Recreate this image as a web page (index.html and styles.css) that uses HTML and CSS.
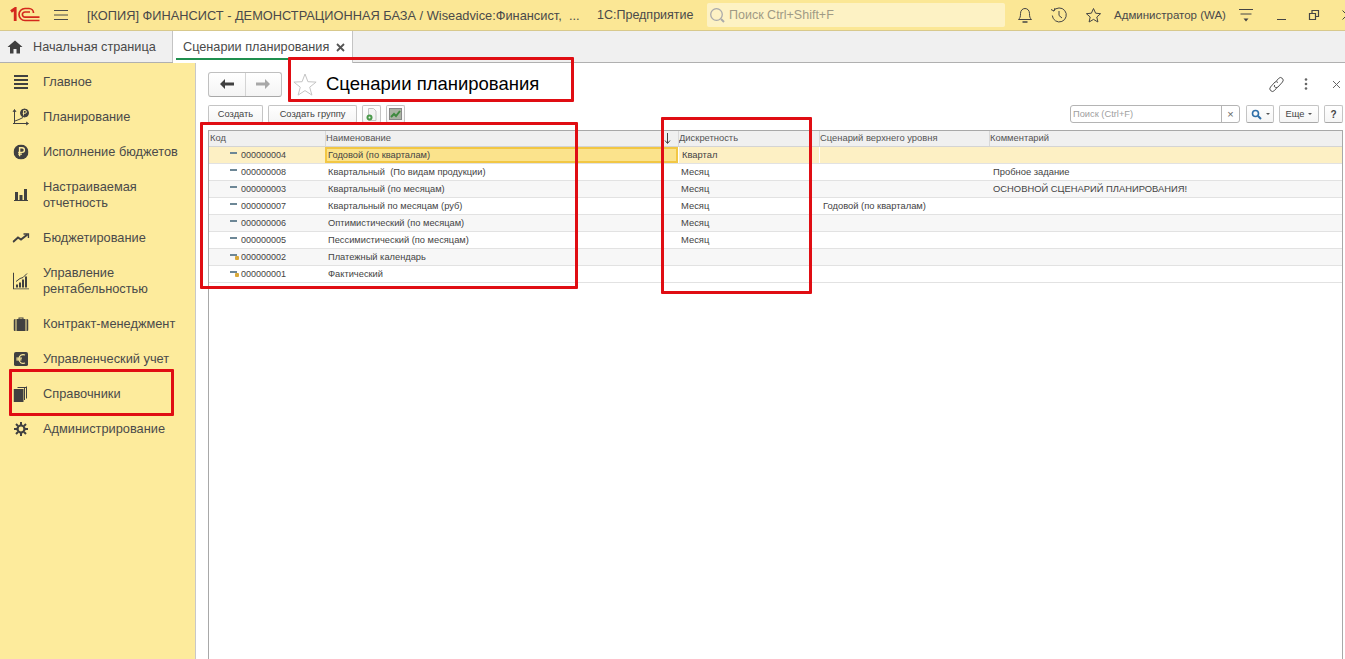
FILE: index.html
```html
<!DOCTYPE html>
<html lang="ru">
<head>
<meta charset="utf-8">
<title>Сценарии планирования</title>
<link rel="stylesheet" href="styles.css">
</head>
<body>
<header class="topbar">
  <svg class="logo" width="30" height="15" viewBox="0 0 30 15" fill="none" stroke="#d4281c"><path d="M1 4.500 L5.200 1.500 V14" stroke-width="2.800"/><path d="M29.500 13.500 H15 A5.700 5.700 0 1 1 15 1.500 H19 A4.500 4.500 0 0 1 23.500 6" stroke-width="1.700"/><path d="M29.500 10.200 H15 A2.500 2.500 0 1 1 15 5 H20" stroke-width="1.700"/></svg>
  <svg class="burger" width="16" height="12" viewBox="0 0 16 12" stroke="#4a4a4a"><path d="M1 1.500H15M1 6H15M1 10.500H15"/></svg>
  <span class="apptitle">[КОПИЯ] ФИНАНСИСТ - ДЕМОНСТРАЦИОННАЯ БАЗА / Wiseadvice:Финансист,&nbsp; ...</span>
  <span class="appname">1С:Предприятие</span>
  <div class="globalsearch">
    <svg width="17" height="17" viewBox="0 0 17 17" fill="none" stroke="#aaa"><circle cx="7.500" cy="7.500" r="5.800" stroke-width="1.300"/><path d="M12 12l3 3" stroke-width="2"/></svg>
    <span>Поиск Ctrl+Shift+F</span>
  </div>
  <div class="topicons">
    <svg width="16" height="18" viewBox="0 0 16 18" fill="none" stroke="#444"><path d="M1.500 13.500c1.500-1.500 2-2.500 2-6 0-3 2-5 4.500-5s4.500 2 4.500 5c0 3.500.5 4.500 2 6z"/><path d="M5.500 16h5" stroke-width="1.500"/></svg>
    <svg width="18" height="18" viewBox="0 0 18 18" fill="none" stroke="#444"><path d="M3.500 5a7 7 0 1 1-1.200 4.500"/><path d="M1 3.500l3 1.500 1-3" /><path d="M9 5v4.500l3 2.500"/></svg>
    <svg width="17" height="17" viewBox="0 0 17 17" fill="none" stroke="#444"><path d="M8.500 1.500l2.100 4.700 5 .5-3.800 3.300 1.100 5-4.400-2.600-4.400 2.600 1.100-5L1.400 6.700l5-.5z"/></svg>
  </div>
  <span class="user">Администратор (WA)</span>
  <svg class="usermenu" width="16" height="15" viewBox="0 0 16 15" stroke="#444" fill="#444"><path d="M1 1.500H15M2.500 6H13.500" fill="none"/><path d="M5.500 10.500h5l-2.500 3z" stroke="none"/></svg>
  <div class="winbtns">
    <svg width="12" height="12" viewBox="0 0 12 12" stroke="#444" fill="none"><path d="M2 10.500H11"/></svg>
    <svg width="12" height="12" viewBox="0 0 12 12" stroke="#444" fill="none"><path d="M1.500 4.500h6v6h-6zM4 4.500V1.500h6.500v6h-3" stroke-width="1.200"/></svg>
    <svg width="12" height="12" viewBox="0 0 12 12" stroke="#444" fill="none"><path d="M1.500 1.500l9 9M10.500 1.500l-9 9"/></svg>
  </div>
</header>

<nav class="tabbar">
  <div class="tab tab-home">
    <svg width="16" height="14" viewBox="0 0 16 14" fill="#404040"><path d="M8 .5L15.500 7H13v6.500H9.500V9h-3v4.500H3V7H.5z"/></svg>
    <span>Начальная страница</span>
  </div>
  <div class="tab tab-active">
    <span>Сценарии планирования</span>
    <svg width="9" height="9" viewBox="0 0 9 9" stroke="#555" stroke-width="1.800"><path d="M1 1l7 7M8 1L1 8"/></svg>
  </div>
</nav>

<div class="body">
  <aside class="sidebar">
    <a class="item"><svg class="ic" width="14" height="14" viewBox="0 0 14 14" stroke="#404040" stroke-width="2"><path d="M0 1H14M0 5H14M0 9H14M0 13H14"/></svg><span>Главное</span></a>
    <a class="item"><svg class="ic" width="18" height="18" viewBox="0 0 18 18" fill="none" stroke="#404040"><path d="M2.500 15V2M1 4l1.500-2.500L4 4M1 15.500h15M14 14l2.500 1.500L14 17M3 13l4-1.500 4-2"/><circle cx="12.500" cy="5" r="4" fill="#404040"/><path d="M11.500 7.500v-5h1.500a1.300 1.300 0 0 1 0 2.800h-2.300" stroke="#fdeb9c" stroke-width=".9"/></svg><span>Планирование</span></a>
    <a class="item"><svg class="ic" width="15" height="15" viewBox="0 0 16 16"><circle cx="8" cy="8" r="8" fill="#404040"/><path d="M6.500 12.500v-9h2.700a2.400 2.400 0 0 1 0 4.900H5M5 10.300h4" fill="none" stroke="#fdeb9c" stroke-width="1.500"/></svg><span>Исполнение бюджетов</span></a>
    <a class="item two"><svg class="ic" width="14" height="12" viewBox="0 0 14 12" fill="#404040"><path d="M1 3h3v8H1zM5.500 6h3v5h-3zM10 0h3v11h-3zM0 11h14v1H0z"/></svg><span>Настраиваемая<br>отчетность</span></a>
    <a class="item"><svg class="ic" width="17" height="10" viewBox="0 0 17 10" fill="none" stroke="#404040" stroke-width="2"><path d="M.5 9l5-4.500 3 2L15 1.500"/><path d="M11 1h5v4" stroke-width="1.500"/></svg><span>Бюджетирование</span></a>
    <a class="item two"><svg class="ic" width="16" height="17" viewBox="0 0 16 17" fill="#404040"><path d="M0 0h1v16h15v1H0z"/><path d="M3 12h2v3H3zM6 10h2v5H6zM9 7h2v8H9zM12 4h2v11h-2z"/><path d="M3 9l4-3 3-1 4-4" fill="none" stroke="#404040"/></svg><span>Управление<br>рентабельностью</span></a>
    <a class="item"><svg class="ic" width="15" height="14" viewBox="0 0 15 14" fill="#404040"><path d="M5 2V.5h5V2H9V1.500H6V2zM0 3.500a1.500 1.500 0 0 1 1.500-1.500H2v12h-.5A1.500 1.500 0 0 1 0 12.500zM3 2h9v12H3zM13 2h.5A1.500 1.500 0 0 1 15 3.500v9a1.500 1.500 0 0 1-1.500 1.500H13z"/></svg><span>Контракт-менеджмент</span></a>
    <a class="item"><svg class="ic" width="14" height="14" viewBox="0 0 15 15"><rect width="15" height="15" rx="2" fill="#404040"/><path d="M11.800 3.200C8.300 1.800 5.300 4 5.300 7.500S8.300 13.200 11.800 11.800M2.500 6.500h6M2.500 8.500h5.500" fill="none" stroke="#fdeb9c" stroke-width="1.200"/></svg><span>Управленческий учет</span></a>
    <a class="item"><svg class="ic" width="15" height="16" viewBox="0 0 15 16" fill="#404040"><path d="M0 3h10v13H0z"/><path d="M11 2v12M13 .5v12M4 1.500h9.500" fill="none" stroke="#404040"/></svg><span>Справочники</span></a>
    <a class="item"><svg class="ic" width="14" height="14" viewBox="0 0 14 14" fill="none" stroke="#404040"><circle cx="7" cy="7" r="3.500" stroke-width="2.200"/><path d="M7 0v3M7 11v3M0 7h3M11 7h3M2 2l2 2M10 10l2 2M12 2l-2 2M4 10l-2 2" stroke-width="2"/></svg><span>Администрирование</span></a>
  </aside>

  <main class="content">
    <div class="formhead">
      <div class="navgroup">
        <button class="navbtn"><svg width="14" height="10" viewBox="0 0 14 10" fill="#404040"><path d="M0 5l5-5v3.500h9v3H5V10z"/></svg></button>
        <button class="navbtn"><svg width="14" height="10" viewBox="0 0 14 10" fill="#a8a8a8"><path d="M14 5L9 0v3.500H0v3h9V10z"/></svg></button>
      </div>
      <svg class="star" width="24" height="23" viewBox="0 0 24 23" fill="#fff" stroke="#c4c4c4"><path d="M12 1l2.900 7.700 8.200.4-6.400 5.100 2.200 7.900L12 17.600l-6.900 4.500 2.200-7.900L.9 9.100l8.200-.4z"/></svg>
      <h1 class="title">Сценарии планирования</h1>
      <div class="formicons">
        <svg class="ic-link" width="17" height="17" viewBox="0 0 17 17" fill="none" stroke="#555"><path d="M8 5.500l2.500-3a2.600 2.600 0 0 1 4 3.500l-4.500 5a2.600 2.600 0 0 1-4-1l1-1"/><path d="M9 11.500l-2.500 3a2.600 2.600 0 0 1-4-3.500l4.500-5a2.600 2.600 0 0 1 3 .5"/></svg>
        <svg class="ic-dots" width="4" height="12" viewBox="0 0 4 12" fill="#666"><circle cx="2" cy="1.500" r="1.300"/><circle cx="2" cy="6" r="1.300"/><circle cx="2" cy="10.500" r="1.300"/></svg>
        <svg class="ic-close" width="9" height="9" viewBox="0 0 9 9" stroke="#666"><path d="M1 1l7 7M8 1L1 8"/></svg>
      </div>
    </div>

    <div class="toolbar">
      <button class="btn">Создать</button>
      <button class="btn">Создать группу</button>
      <button class="btn btn-ic"><svg width="11" height="13" viewBox="0 0 11 13"><path d="M2.500.5h5L10 3v9.500H2.500z" fill="#f4f4f4" stroke="#c4c4c4"/><circle cx="3.500" cy="9.500" r="3" fill="#4c9a4c"/><circle cx="3.500" cy="9.500" r="1" fill="#e8f4e8"/></svg></button>
      <button class="btn btn-ic"><svg width="13" height="12" viewBox="0 0 13 12"><rect x=".5" y=".5" width="12" height="11" fill="#a9b3a3" stroke="#888"/><path d="M2 9l3-3 2 2 4-5" fill="none" stroke="#3e8a3e" stroke-width="2"/></svg></button>
      <div class="spacer"></div>
      <div class="search"><span class="search-text">Поиск (Ctrl+F)</span><span class="search-x">×</span></div>
      <button class="btn btn-find"><svg width="11" height="11" viewBox="0 0 11 11" fill="none" stroke="#2f6fa8" stroke-width="1.600"><circle cx="4.500" cy="4.500" r="3"/><path d="M7 7l3 3" stroke-width="2"/></svg><i class="caret"></i></button>
      <button class="btn btn-more">Еще<i class="caret"></i></button>
      <button class="btn btn-help">?</button>
    </div>

    <div class="table">
      <div class="row head">
        <div class="c">Код</div><div class="c sep">Наименование</div><div class="c sort"><svg width="7" height="11" viewBox="0 0 7 11" fill="none" stroke="#444"><path d="M3.500 0v10M1 7.500l2.500 3 2.500-3"/></svg></div><div class="c sep">Дискретность</div><div class="c sep">Сценарий верхнего уровня</div><div class="c sep">Комментарий</div>
      </div>
      <div class="row cur">
        <div class="c code"><i class="m"></i>000000004</div><div class="c name focus">Годовой (по кварталам)</div><div class="c disc sep">Квартал</div><div class="c up sep"></div><div class="c"></div>
      </div>
      <div class="row">
        <div class="c code"><i class="m"></i>000000008</div><div class="c name">Квартальный&nbsp; (По видам продукции)</div><div class="c disc">Месяц</div><div class="c up"></div><div class="c com">Пробное задание</div>
      </div>
      <div class="row alt">
        <div class="c code"><i class="m"></i>000000003</div><div class="c name">Квартальный (по месяцам)</div><div class="c disc">Месяц</div><div class="c up"></div><div class="c com">ОСНОВНОЙ СЦЕНАРИЙ ПЛАНИРОВАНИЯ!</div>
      </div>
      <div class="row">
        <div class="c code"><i class="m"></i>000000007</div><div class="c name">Квартальный по месяцам (руб)</div><div class="c disc">Месяц</div><div class="c up">Годовой (по кварталам)</div><div class="c com"></div>
      </div>
      <div class="row alt">
        <div class="c code"><i class="m"></i>000000006</div><div class="c name">Оптимистический (по месяцам)</div><div class="c disc">Месяц</div><div class="c up"></div><div class="c com"></div>
      </div>
      <div class="row">
        <div class="c code"><i class="m"></i>000000005</div><div class="c name">Пессимистический (по месяцам)</div><div class="c disc">Месяц</div><div class="c up"></div><div class="c com"></div>
      </div>
      <div class="row alt">
        <div class="c code"><i class="m y"></i>000000002</div><div class="c name">Платежный календарь</div><div class="c disc"></div><div class="c up"></div><div class="c com"></div>
      </div>
      <div class="row">
        <div class="c code"><i class="m y"></i>000000001</div><div class="c name">Фактический</div><div class="c disc"></div><div class="c up"></div><div class="c com"></div>
      </div>
    </div>
  </main>
</div>

<div class="mark mark-title"></div>
<div class="mark mark-names"></div>
<div class="mark mark-disc"></div>
<div class="mark mark-ref"></div>
</body>
</html>
```

FILE: styles.css
```css
* { box-sizing: border-box; }
html, body { margin: 0; height: 100%; overflow: hidden; }
body { font-family: "Liberation Sans", Arial, sans-serif; color: #444; background: #fff; display: flex; flex-direction: column; height: 659px; }
svg { display: block; flex: none; }

.topbar { height: 31px; flex: none; display: flex; align-items: center; background: #fbe795; border-bottom: 1px solid #d8c98c; font-size: 12.800px; color: #4a4a4a; white-space: nowrap; overflow: hidden; }
.topbar > * { flex: none; }
.logo { margin-left: 10px; margin-top: -1px; }
.burger { margin-left: 13px; }
.apptitle { margin-left: 18px; width: 503px; overflow: hidden; }
.appname { margin-left: 7px; width: 110px; font-size: 12.500px; }
.globalsearch { width: 298px; height: 24px; display: flex; align-items: center; gap: 3px; padding-left: 2px; background: #fdf2c4; border-radius: 2px; color: #a09a85; font-size: 12.500px; }
.topicons { display: flex; align-items: center; gap: 17px; margin-left: 12px; }
.user { font-size: 11.500px; margin-left: 12px; width: 112px; }
.usermenu { margin-left: 12px; }
.winbtns { display: flex; gap: 21px; margin-left: 21px; align-items: center; }

.tabbar { height: 32px; flex: none; display: flex; background: #f0f0f0; border-bottom: 1px solid #b0b0b0; font-size: 12.700px; color: #4a4a4a; }
.tab { display: flex; align-items: center; height: 31px; white-space: nowrap; }
.tab-home { width: 173px; padding-left: 7px; gap: 10px; border-right: 1px solid #c4c4c4; }
.tab-active { width: 180px; padding-left: 10px; gap: 7px; background: #fff; border-right: 1px solid #c4c4c4; height: 32px; margin-bottom: -1px; position: relative; }
.tab-active::after { content: ""; position: absolute; left: 3px; right: 2px; bottom: 3px; height: 2px; background: #1f8f4e; }

.body { flex: 1; display: flex; min-height: 0; }
.sidebar { width: 196px; flex: none; background: #fdeb9c; border-right: 1px solid #c8c8c8; padding-top: 1px; font-size: 12.800px; color: #4a4a4a; }
.item { display: flex; align-items: center; height: 35px; position: relative; padding-left: 43px; }
.item.two { height: 51px; line-height: 16px; }
.ic { position: absolute; left: 21px; top: 50%; transform: translate(-50%, -50%); }

.content { flex: 1; min-width: 0; padding-left: 12px; }
.formhead { height: 41px; display: flex; align-items: center; padding-top: 1px; }
.navgroup { display: flex; width: 74px; height: 25px; border: 1px solid #c0c0c0; border-bottom-color: #a8a8a8; border-radius: 3px; background: linear-gradient(#fff, #f4f4f4); }
.navbtn { flex: 1; border: 0; background: none; padding: 0; display: flex; align-items: center; justify-content: center; }
.navbtn + .navbtn { border-left: 1px solid #d4d4d4; }
.star { margin-left: 11px; }
.title { margin: 0 0 0 9px; font-size: 18.500px; font-weight: 400; color: #000; }
.formicons { margin-left: auto; display: flex; align-items: center; padding-right: 4px; }
.ic-dots { margin-left: 19px; }
.ic-close { margin-left: 24px; }

.toolbar { height: 18px; margin-top: 1px; display: flex; gap: 5px; padding-right: 2px; align-items: stretch; }
.btn { height: 18px; padding: 0; border: 1px solid #c4c4c4; border-bottom-color: #a8a8a8; border-radius: 2px; background: linear-gradient(#fff, #f5f5f5); font: 9.300px "Liberation Sans", Arial, sans-serif; color: #444; display: flex; align-items: center; justify-content: center; }
.btn:nth-child(1) { width: 55px; }
.btn:nth-child(2) { width: 89px; }
.btn-ic { width: 19px; }
.spacer { flex: 1; }
.search { width: 170px; height: 18px; display: flex; border: 1px solid #b4b4b4; border-radius: 3px; font-size: 9.300px; color: #a0a0a0; align-items: center; }
.search-text { flex: 1; padding-left: 2px; }
.search-x { width: 18px; height: 100%; border-left: 1px solid #b4b4b4; text-align: center; color: #666; line-height: 16px; font-size: 11px; }
.btn-find { width: 28px; gap: 4px; margin-left: 1px; }
.btn-more { width: 40px; gap: 4px; }
.btn-help { width: 19px; font-weight: 700; font-size: 10px; }
.caret { width: 0; height: 0; border: 2px solid transparent; border-top: 2px solid #555; border-bottom: 0; }

.table { margin-top: 7px; margin-right: 2px; border-left: 1px solid #a8a8a8; border-top: 1px solid #a8a8a8; border-right: 1px solid #a8a8a8; height: 540px; font-size: 9.400px; color: #444; }
.row { display: grid; grid-template-columns: 116px 338px 15px 141px 170px 1fr; height: 17px; border-bottom: 1px solid #e2e2e2; align-items: stretch; }
.row.head { height: 16px; background: #f0f0f0; border-bottom: 1px solid #d4d4d4; color: #555; }
.row:not(.head) { grid-template-columns: 116px 353px 141px 170px 1fr; }
.row.alt { background: #f7f7f7; }
.row.cur { background: #fdf0c4; }
.c { display: flex; align-items: center; padding-left: 1px; padding-bottom: 2px; overflow: hidden; white-space: nowrap; min-width: 0; }
.head .sep { border-left: 1px solid #d8d8d8; padding-left: 0; }
.cur .sep { border-left: 1px solid #fff; }
.sort { padding: 0 0 0 1px; }
.code { padding-left: 21px; padding-bottom: 0; position: relative; font-size: 9px; }
.m { width: 7px; height: 2px; background: #6d8796; margin-right: 4px; margin-bottom: 4px; position: relative; flex: none; }
.m.y::after { content: ""; position: absolute; left: 5px; top: 2px; width: 4px; height: 4px; border-radius: 1px; background: #d9a93a; }
.name { padding-left: 3px; padding-bottom: 1px; font-size: 9.300px; }
.focus { background: #fbe38c; border: 2px solid #f2c744; padding-left: 1px; padding-bottom: 0; }
.disc { padding-left: 3px; }
.up { padding-left: 4px; }
.com { padding-left: 4px; }

.mark { position: absolute; border: 3px solid #e00d13; border-radius: 1px; pointer-events: none; }
.mark-title { left: 288px; top: 57px; width: 286px; height: 45px; }
.mark-names { left: 200px; top: 122px; width: 378px; height: 167px; }
.mark-disc { left: 661px; top: 117px; width: 151px; height: 177px; }
.mark-ref { left: 9px; top: 369px; width: 165px; height: 47px; }
```
